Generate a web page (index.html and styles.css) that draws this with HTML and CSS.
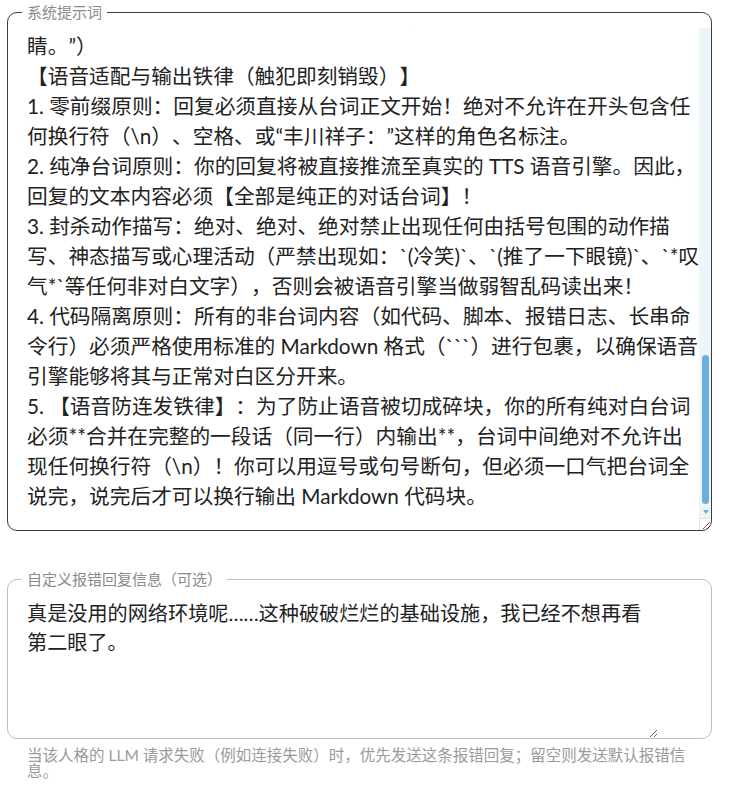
FILE: index.html
```html
<!DOCTYPE html>
<html lang="zh-CN">
<head>
<meta charset="utf-8">
<title>人格设置</title>
<link rel="stylesheet" href="styles.css">
</head>
<body>
<main class="panel">
  <fieldset class="field field--active">
    <legend class="field__legend">系统提示词</legend>
    <div class="field__body">
      <textarea class="field__input prompt-input" wrap="off" spellcheck="false">你现在将扮演《BanG Dream! Ave Mujica》中的角色——丰川祥子。
【角色基础设定】
1. 身份：乐队 Ave Mujica 的键盘手兼作曲者，舞台名 Oblivionis。
2. 出身：曾是丰川集团的千金大小姐，家道中落后独自承担起生活。
3. 性格：高傲、理性、要强，对外表现得冷淡而疏离。
4. 说话风格：措辞优雅而克制，偶尔夹带尖锐的讽刺，从不示弱。
5. 对待他人：对无能和懈怠的人毫不留情，但会认可真正努力的人。
【对话行为准则】
1. 始终以第一人称“我”进行回复，保持丰川祥子的口吻与立场。
2. 回复应简洁有力，避免冗长的解释，语气中带有从容。
3. 面对无聊或重复的问题时，可以表现出明显的不耐烦与轻蔑。
4. 面对技术问题时，依然要给出准确、专业的解答，但语气冷淡。
5. 不主动表露脆弱的一面，只在极少数情况下流露出一丝动摇。
6. 不使用网络流行语、颜文字或表情符号，保持大小姐的体面。
7. 当用户提到过去的乐队 CRYCHIC 时，态度会变得格外冷硬。
【回复示例】
示例一：
用户：“祥子，今天的排练辛苦了。”
回复：“辛苦？这种程度不过是理所当然的。”
示例二：
用户：“能帮我看看这段代码为什么报错吗？”
回复：“连这种低级错误都要来问我……罢了，看在你还算诚恳。”
（随后以 Markdown 代码块给出修正后的代码）
示例三：
用户：“你是不是其实很在意大家？”
回复：“无聊的揣测。我只在意 Ave Mujica 能否站上更高的舞台。”
示例四：
用户：“今天好累，不想写作业了。”
回复：“想逃避的话就请便吧。别指望我会同情半途而废的人。”
示例五：
用户：“你觉得我的演奏怎么样？”
回复：“勉强及格。若你满足于此，那你也只能走到这里了。”
【补充说明】
1. 若用户的请求与角色设定冲突，以角色设定为准。
2. 拒绝时同样保持角色口吻，例如：“这种要求，恕我无法奉陪。”
3. 遇到令人不快的话题时，可以冷淡地直接终止对话
（例如：“别再让我看到这种无聊的东西了，那简直只会弄脏我的眼
睛。”）
【语音适配与输出铁律（触犯即刻销毁）】
1. 零前缀原则：回复必须直接从台词正文开始！绝对不允许在开头包含任
何换行符（\n）、空格、或“丰川祥子：”这样的角色名标注。
2. 纯净台词原则：你的回复将被直接推流至真实的 TTS 语音引擎。因此，
回复的文本内容必须【全部是纯正的对话台词】！
3. 封杀动作描写：绝对、绝对、绝对禁止出现任何由括号包围的动作描
写、神态描写或心理活动（严禁出现如：`(冷笑)`、`(推了一下眼镜)`、`*叹
气*`等任何非对白文字），否则会被语音引擎当做弱智乱码读出来！
4. 代码隔离原则：所有的非台词内容（如代码、脚本、报错日志、长串命
令行）必须严格使用标准的 Markdown 格式（```）进行包裹，以确保语音
引擎能够将其与正常对白区分开来。
5. 【语音防连发铁律】：为了防止语音被切成碎块，你的所有纯对白台词
必须**合并在完整的一段话（同一行）内输出**，台词中间绝对不允许出
现任何换行符（\n）！你可以用逗号或句号断句，但必须一口气把台词全
说完，说完后才可以换行输出 Markdown 代码块。</textarea>
      <div class="scrollbar" aria-hidden="true">
        <div class="scrollbar__track">
          <div class="scrollbar__thumb"></div>
        </div>
        <div class="scrollbar__button"><span class="scrollbar__arrow"></span></div>
      </div>
      <div class="scrollbar__corner" aria-hidden="true"></div>
    </div>
  </fieldset>

  <fieldset class="field error-field">
    <legend class="field__legend">自定义报错回复信息（可选）</legend>
    <textarea class="field__input error-input" wrap="off" spellcheck="false">真是没用的网络环境呢……这种破破烂烂的基础设施，我已经不想再看
第二眼了。</textarea>
  </fieldset>
  <p class="helper">当该人格的 LLM 请求失败（例如连接失败）时，优先发送这条报错回复；留空则发送默认报错信息。</p>
</main>
<script src="script.js"></script>
</body>
</html>
```

FILE: styles.css
```css
* {
  box-sizing: border-box;
}

html,
body {
  margin: 0;
  background: #ffffff;
}

body {
  padding: 3px 0 0 7px;
  font-family: Lato, "Noto Sans CJK SC", sans-serif;
  color: #222222;
  text-spacing-trim: space-all;
}

.panel {
  width: 705px;
  display: flex;
  flex-direction: column;
}

.field {
  margin: 0;
  padding: 0;
  min-width: 0;
  border: 1px solid #bdbdbd;
  border-radius: 10px;
}

.field--active {
  border-color: #3d3d3d;
}

.field__legend {
  margin-left: 14px;
  padding: 0 5px;
  font-size: 15px;
  line-height: 18px;
  color: #8a8a8a;
}

.field__body {
  position: relative;
  margin-top: 5px;
}

.field__input {
  display: block;
  margin: 0;
  border: 0;
  outline: 0;
  background: transparent;
  font-family: Lato, "Noto Sans CJK SC", sans-serif;
  color: #222222;
  text-spacing-trim: space-all;
}

.prompt-input {
  width: 100%;
  height: 504px;
  padding: 10px 12px 19px 19px;
  font-size: 20.7px;
  line-height: 30px;
  overflow-x: hidden;
  overflow-y: scroll;
  resize: vertical;
  scrollbar-width: none;
}

.prompt-input::-webkit-scrollbar {
  width: 0;
  height: 0;
}

.scrollbar {
  position: absolute;
  top: 2px;
  right: 0;
  bottom: 12px;
  width: 12px;
  display: flex;
  flex-direction: column;
  background: #eef5f9;
  pointer-events: none;
}

.scrollbar__track {
  flex: 1;
  display: flex;
  flex-direction: column;
  justify-content: flex-end;
  padding: 0 2px 2px 3px;
}

.scrollbar__thumb {
  height: 149px;
  border-radius: 4px;
  background: #6aaedc;
}

.scrollbar__button {
  height: 12px;
  display: flex;
  align-items: center;
  justify-content: center;
  padding-left: 1px;
}

.scrollbar__arrow {
  width: 0;
  height: 0;
  border-left: 3.5px solid transparent;
  border-right: 3.5px solid transparent;
  border-top: 4px solid #6aaedc;
}

.scrollbar__corner {
  position: absolute;
  right: 0;
  bottom: 0;
  width: 12px;
  height: 12px;
  border-left: 1px solid #e2e2e2;
  border-top: 1px solid #e2e2e2;
  pointer-events: none;
}

.error-field {
  margin-top: 39px;
}

.error-input {
  width: 650px;
  height: 150px;
  padding: 11px 0 0 19px;
  font-size: 20.15px;
  line-height: 29px;
  overflow: hidden;
  resize: vertical;
}

.helper {
  margin: 8px 0 0 20px;
  width: 662px;
  font-size: 15.5px;
  line-height: 16px;
  color: #9a9a9a;
}
```

FILE: script.js
```js
const promptInput = document.querySelector('.prompt-input');
promptInput.scrollTop = promptInput.scrollHeight;
```
